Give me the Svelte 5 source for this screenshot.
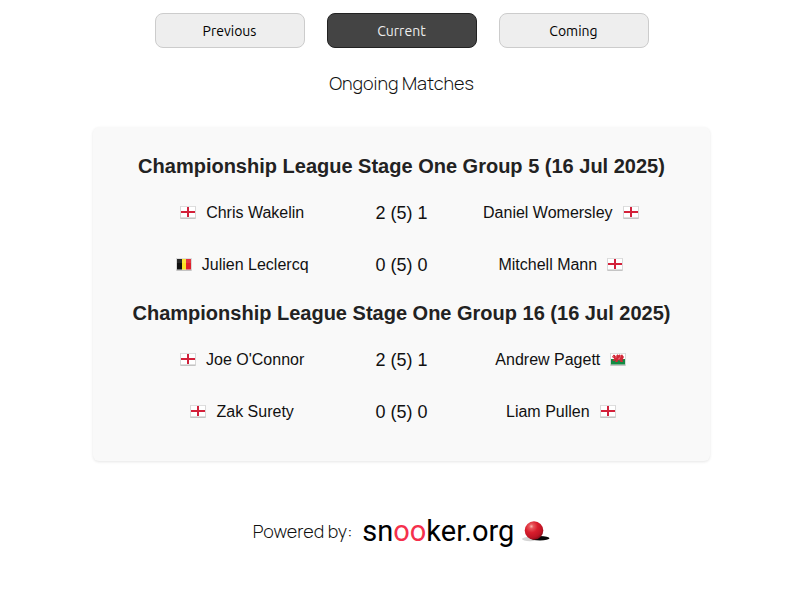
<script>
  const tabs = ['Previous', 'Current', 'Coming'];
  let active = $state('Current');

  const groups = [
    {
      title: 'Championship League Stage One Group 5 (16 Jul 2025)',
      matches: [
        { home: 'Chris Wakelin', homeFlag: 'England', score: '2 (5) 1', away: 'Daniel Womersley', awayFlag: 'England' },
        { home: 'Julien Leclercq', homeFlag: 'Belgium', score: '0 (5) 0', away: 'Mitchell Mann', awayFlag: 'England' }
      ]
    },
    {
      title: 'Championship League Stage One Group 16 (16 Jul 2025)',
      matches: [
        { home: "Joe O'Connor", homeFlag: 'England', score: '2 (5) 1', away: 'Andrew Pagett', awayFlag: 'Wales' },
        { home: 'Zak Surety', homeFlag: 'England', score: '0 (5) 0', away: 'Liam Pullen', awayFlag: 'England' }
      ]
    }
  ];
</script>

{#snippet flag(country)}
  <svg class="flag" viewBox="0 0 16 16" role="img" aria-label={country}>
    <rect x="0" y="1" width="16" height="13" rx="1.2" fill="#c4c4c4" />
    <rect x="0.2" y="1" width="15.6" height="12" rx="1" fill="#dedede" />
    {#if country === 'England'}
      <rect x="1" y="2" width="14" height="10" fill="#fff" />
      <path d="M7 2h2v10H7z" fill="#d0213c" />
      <path d="M1 6h14v2H1z" fill="#d4213a" />
    {:else if country === 'Belgium'}
      <path d="M1 2h5v10.5H1z" fill="#111" />
      <path d="M6 2h4v10.5H6z" fill="#fbe325" />
      <path d="M10 2h5v10.5h-5z" fill="#df202c" />
      <path d="M1 2h14v4H1z" fill="#fff" opacity=".1" />
    {:else}
      <path d="M1 2h14v5H1z" fill="#fff" />
      <path d="M1 7h14v5.5H1z" fill="#128a43" />
      <path d="M2 5l1.5-2.3 1.5.3.5 1.5 2-2.2 1 1L10 2.3l.5 1.5L12 2.3l1 1.5L14 5l-1 1.5.8 1.5-1.6-.4.8 2.4h-2.5L10 8.5l-2-.2L7.5 10H5l1-2.2L4 9l-1.5-.5 1.8-2z" fill="#d32636" />
      <path d="M5.5 5.5l1.5-1M9.5 5.5l1.5-1M3 4.5l1 .5M8 7l2-.5" stroke="#eaa3aa" stroke-width=".6" />
    {/if}
  </svg>
{/snippet}

<main>
  <nav aria-label="Matches">
    {#each tabs as tab}
      <button class:active={active === tab} onclick={() => (active = tab)}>{tab}</button>
    {/each}
  </nav>

  <h1>Ongoing Matches</h1>

  <div class="card">
    {#each groups as group}
      <section>
        <h2>{group.title}</h2>
        <table aria-label={group.title}>
          <tbody>
            {#each group.matches as match}
              <tr>
                <td><div class="player">{@render flag(match.homeFlag)}<span>{match.home}</span></div></td>
                <td class="score">{match.score}</td>
                <td><div class="player"><span>{match.away}</span>{@render flag(match.awayFlag)}</div></td>
              </tr>
            {/each}
          </tbody>
        </table>
      </section>
    {/each}
  </div>

  <footer>
    <span>Powered by:</span>
    <a href="https://snooker.org" aria-label="snooker.org">
      <span class="wordmark">sn<span class="red">oo</span>ker.org</span>
      <svg class="ball" viewBox="0 0 28 24" aria-hidden="true">
        <defs>
          <radialGradient id="ball" cx=".36" cy=".28" r=".75">
            <stop offset="0" stop-color="#f7b4ac" />
            <stop offset=".16" stop-color="#e8545a" />
            <stop offset=".45" stop-color="#d91d2c" />
            <stop offset=".8" stop-color="#bd1424" />
            <stop offset="1" stop-color="#850b18" />
          </radialGradient>
        </defs>
        <ellipse cx="8" cy="20" rx="8" ry="2.2" fill="#d5d5d5" />
        <ellipse cx="18" cy="19.2" rx="9.5" ry="2.2" fill="#080808" />
        <circle cx="12" cy="11.5" r="9.3" fill="url(#ball)" />
      </svg>
    </a>
  </footer>
</main>

<style>
  :global(body) {
    margin: 0;
    background: #fff;
  }

  main {
    padding: 13px 90px 48px 93px;
    color: #111;
    font-family: 'Liberation Sans', Arial, sans-serif;
    text-align: center;
  }

  nav {
    display: flex;
    justify-content: center;
    gap: 22px;
  }

  button {
    box-sizing: border-box;
    width: 150px;
    height: 35px;
    padding: 0;
    border: 1px solid #ccc;
    border-radius: 8px;
    background: #eee;
    color: #000;
    font: 14px/20px Ubuntu, 'Noto Sans', sans-serif;
    cursor: pointer;
  }

  button.active {
    border-color: #222;
    background: #444;
    color: #eee;
  }

  h1,
  footer {
    font-family: Manrope, Inter, sans-serif;
    font-size: 18px;
    font-weight: 300;
    line-height: 24px;
  }

  h1 {
    margin: 23px 0 32px;
  }

  .card {
    padding: 17px 24px 23px;
    border-radius: 6px;
    background: #f9f9f9;
    box-shadow: 0 1px 3px rgba(0, 0, 0, 0.1);
  }

  h2 {
    margin: 0;
    padding: 11px 0 9px;
    color: #222;
    font-size: 20px;
    line-height: 23px;
  }

  table {
    width: 84%;
    margin: 0 auto;
    border-collapse: collapse;
    table-layout: fixed;
  }

  td {
    height: 52px;
    padding: 0;
    font-size: 16px;
    line-height: 20px;
    white-space: nowrap;
  }

  .score {
    font-size: 18px;
  }

  .player {
    display: flex;
    align-items: center;
    justify-content: center;
    gap: 10px;
  }

  .flag {
    flex: none;
    width: 16px;
    height: 16px;
  }

  footer {
    display: flex;
    align-items: center;
    justify-content: center;
    gap: 10px;
    margin-top: 52px;
  }

  a {
    display: flex;
    align-items: center;
    gap: 8px;
    color: #000;
    text-decoration: none;
  }

  .wordmark {
    font: 29px/36px Roboto, sans-serif;
  }

  .red {
    color: #f5304c;
  }

  .ball {
    width: 28px;
    height: 24px;
  }
</style>
